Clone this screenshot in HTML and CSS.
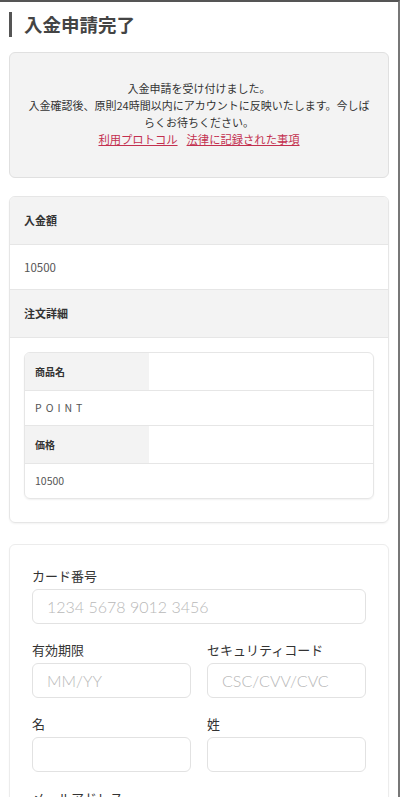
FILE: index.html
```html
<!DOCTYPE html>
<html lang="ja">
<head>
<meta charset="utf-8">
<link rel="stylesheet" href="styles.css">
</head>
<body>
<div class="frame">
  <h1 class="title">入金申請完了</h1>

  <div class="notice">
    <p>入金申請を受け付けました。</p>
    <p>入金確認後、原則24時間以内にアカウントに反映いたします。今しばらくお待ちください。</p>
    <p class="links"><a href="#">利用プロトコル</a><a href="#">法律に記録された事項</a></p>
  </div>

  <div class="panel">
    <div class="phead">入金額</div>
    <div class="pval">10500</div>
    <div class="phead">注文詳細</div>
    <div class="pbody">
      <div class="itable">
        <div class="ihead"><span>商品名</span></div>
        <div class="ival spaced">POINT</div>
        <div class="ihead"><span>価格</span></div>
        <div class="ival">10500</div>
      </div>
    </div>
  </div>

  <div class="card">
    <div class="field">
      <label>カード番号</label>
      <div class="input">1234 5678 9012 3456</div>
    </div>
    <div class="row">
      <div class="field">
        <label>有効期限</label>
        <div class="input">MM/YY</div>
      </div>
      <div class="field">
        <label>セキュリティコード</label>
        <div class="input">CSC/CVV/CVC</div>
      </div>
    </div>
    <div class="row">
      <div class="field">
        <label>名</label>
        <div class="input"></div>
      </div>
      <div class="field">
        <label>姓</label>
        <div class="input"></div>
      </div>
    </div>
    <div class="field">
      <label>メールアドレス</label>
      <div class="input"></div>
    </div>
  </div>
</div>
</body>
</html>
```

FILE: styles.css
```css
html, body {
  margin: 0;
  padding: 0;
  background: #fff;
}
body {
  font-family: "Noto Sans CJK JP", "Noto Sans", sans-serif;
  color: #333;
  height: 797px;
  overflow: hidden;
}
.frame {
  box-sizing: border-box;
  width: 400px;
  min-height: 797px;
  border-top: 2px solid #555;
  border-right: 2px solid #777;
  padding: 10px 9px 0 9px;
}
.title {
  margin: 0;
  font-size: 18.5px;
  font-weight: bold;
  color: #444;
  line-height: 25px;
  padding-left: 12px;
  border-left: 3px solid #555;
}
.notice {
  margin-top: 15px;
  background: #f3f3f3;
  border: 1px solid #e0e0e0;
  border-radius: 6px;
  padding: 27px 13px 29px;
  text-align: center;
  font-size: 11px;
  line-height: 17px;
  color: #333;
}
.notice p { margin: 0; }
.notice .links {
  display: flex;
  justify-content: center;
  gap: 9px;
  font-size: 11.3px;
}
.notice .links a {
  color: #c3304f;
  text-decoration: underline;
}
.panel {
  margin-top: 18px;
  border: 1px solid #e6e6e6;
  border-radius: 6px;
  overflow: hidden;
  box-shadow: 0 1px 2px rgba(0,0,0,0.05);
}
.phead {
  background: #f3f3f3;
  height: 47px;
  line-height: 47px;
  padding-left: 14px;
  font-size: 11px;
  font-weight: bold;
  color: #333;
  border-bottom: 1px solid #e6e6e6;
}
.pval {
  height: 44px;
  line-height: 44px;
  padding-left: 14px;
  font-size: 11.5px;
  color: #555;
  border-bottom: 1px solid #e6e6e6;
}
.pbody {
  padding: 14px 14px 23px;
}
.itable {
  border: 1px solid #e6e6e6;
  border-radius: 6px;
  overflow: hidden;
  box-shadow: 0 1px 2px rgba(0,0,0,0.06);
}
.ihead {
  height: 37px;
  border-bottom: 1px solid #e6e6e6;
  display: flex;
}
.ihead span {
  width: 124px;
  background: #f3f3f3;
  line-height: 37px;
  padding-left: 10px;
  box-sizing: border-box;
  font-size: 10px;
  font-weight: bold;
  color: #333;
}
.ival {
  height: 34px;
  line-height: 34px;
  padding-left: 10px;
  font-size: 10.5px;
  color: #555;
  border-bottom: 1px solid #e6e6e6;
}
.ival:last-child { border-bottom: none; }
.ival.spaced { letter-spacing: 4px; }
.card {
  margin-top: 21px;
  border: 1px solid #ececec;
  border-radius: 6px;
  padding: 22px 22px 20px;
  box-shadow: 0 1px 2px rgba(0,0,0,0.04);
}
.row {
  display: flex;
  gap: 16px;
}
.row .field { flex: 1; }
.field {
  margin-bottom: 17px;
}
.field label {
  display: block;
  font-size: 13px;
  line-height: 18px;
  color: #333;
  margin-bottom: 4px;
}
.input {
  box-sizing: border-box;
  height: 35px;
  border: 1px solid #e2e2e2;
  border-radius: 6px;
  padding-left: 14px;
  line-height: 33px;
  font-family: "Lato", "Open Sans", sans-serif;
  font-weight: 300;
  font-size: 16px;
  color: #b8b8b8;
}
```
